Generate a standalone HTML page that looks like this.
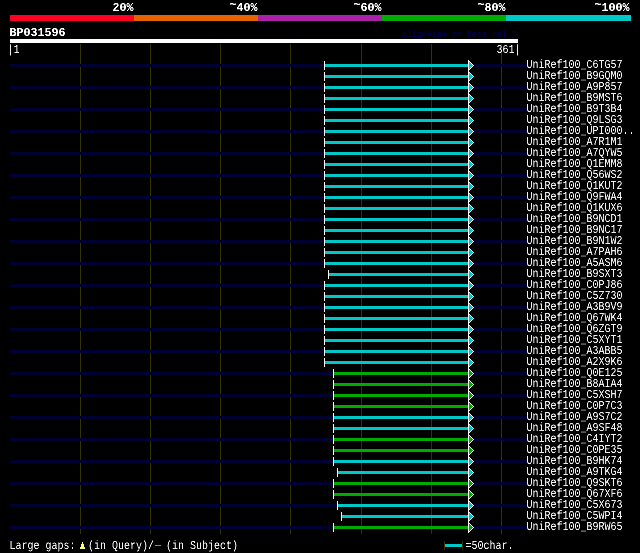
<!DOCTYPE html>
<html lang="en"><head><meta charset="utf-8"><title>AlignView BP031596</title>
<style>
html,body{margin:0;padding:0;background:#000;}
body{width:640px;height:553px;overflow:hidden;}
svg{display:block;will-change:transform;}
text{font-family:"Liberation Mono","DejaVu Sans Mono",monospace;fill:#fff;white-space:pre;text-rendering:geometricPrecision;}
.s{font-size:12.15px;fill:#f0f0f0;}
.b{font-size:12.15px;font-weight:bold;}
.t{font-size:9.1px;fill:#000058;stroke:#000058;stroke-width:0.12px;}
</style></head><body>
<svg width="640" height="553" viewBox="0 0 640 553" shape-rendering="crispEdges">
<defs><filter id="ct" x="0" y="0" width="640" height="553" filterUnits="userSpaceOnUse" color-interpolation-filters="sRGB"><feComponentTransfer><feFuncA type="table" tableValues="0 0 0 0.2 0.5 0.5 0.5 0.85 1 1 1"/></feComponentTransfer></filter></defs>
<rect x="0" y="0" width="640" height="553" fill="#000"/>
<rect x="10" y="15" width="124" height="6" fill="#ff0022"/>
<rect x="134" y="15" width="124" height="6" fill="#e66400"/>
<rect x="258" y="15" width="124" height="6" fill="#aa22aa"/>
<rect x="382" y="15" width="124" height="6" fill="#00aa00"/>
<rect x="506" y="15" width="125" height="6" fill="#00c8c8"/>
<rect x="10" y="39" width="508" height="4" fill="#fff"/>
<rect x="80" y="44" width="1" height="490" fill="#333300"/>
<rect x="150" y="44" width="1" height="490" fill="#333300"/>
<rect x="220" y="44" width="1" height="490" fill="#333300"/>
<rect x="290" y="44" width="1" height="490" fill="#333300"/>
<rect x="361" y="44" width="1" height="490" fill="#333300"/>
<rect x="431" y="44" width="1" height="490" fill="#333300"/>
<rect x="501" y="44" width="1" height="490" fill="#333300"/>
<rect x="10" y="64" width="517" height="3" fill="#000033"/>
<rect x="324" y="64" width="144" height="3" fill="#00c8c8"/>
<rect x="324" y="61" width="1" height="9" fill="#fff"/>
<polygon points="468.5,60.5 473.5,65.5 468.5,70.5" fill="#00c8c8" stroke="#fff" stroke-width="1"/>
<rect x="324" y="75" width="144" height="3" fill="#00c8c8"/>
<rect x="324" y="72" width="1" height="9" fill="#fff"/>
<polygon points="468.5,71.5 473.5,76.5 468.5,81.5" fill="#00c8c8" stroke="#fff" stroke-width="1"/>
<rect x="10" y="86" width="517" height="3" fill="#000033"/>
<rect x="324" y="86" width="144" height="3" fill="#00c8c8"/>
<rect x="324" y="83" width="1" height="9" fill="#fff"/>
<polygon points="468.5,82.5 473.5,87.5 468.5,92.5" fill="#00c8c8" stroke="#fff" stroke-width="1"/>
<rect x="324" y="97" width="144" height="3" fill="#00c8c8"/>
<rect x="324" y="94" width="1" height="9" fill="#fff"/>
<polygon points="468.5,93.5 473.5,98.5 468.5,103.5" fill="#00c8c8" stroke="#fff" stroke-width="1"/>
<rect x="10" y="108" width="517" height="3" fill="#000033"/>
<rect x="324" y="108" width="144" height="3" fill="#00c8c8"/>
<rect x="324" y="105" width="1" height="9" fill="#fff"/>
<polygon points="468.5,104.5 473.5,109.5 468.5,114.5" fill="#00c8c8" stroke="#fff" stroke-width="1"/>
<rect x="324" y="119" width="144" height="3" fill="#00c8c8"/>
<rect x="324" y="116" width="1" height="9" fill="#fff"/>
<polygon points="468.5,115.5 473.5,120.5 468.5,125.5" fill="#00c8c8" stroke="#fff" stroke-width="1"/>
<rect x="10" y="130" width="517" height="3" fill="#000033"/>
<rect x="324" y="130" width="144" height="3" fill="#00c8c8"/>
<rect x="324" y="127" width="1" height="9" fill="#fff"/>
<polygon points="468.5,126.5 473.5,131.5 468.5,136.5" fill="#00c8c8" stroke="#fff" stroke-width="1"/>
<rect x="324" y="141" width="144" height="3" fill="#00c8c8"/>
<rect x="324" y="138" width="1" height="9" fill="#fff"/>
<polygon points="468.5,137.5 473.5,142.5 468.5,147.5" fill="#00c8c8" stroke="#fff" stroke-width="1"/>
<rect x="10" y="152" width="517" height="3" fill="#000033"/>
<rect x="324" y="152" width="144" height="3" fill="#00c8c8"/>
<rect x="324" y="149" width="1" height="9" fill="#fff"/>
<polygon points="468.5,148.5 473.5,153.5 468.5,158.5" fill="#00c8c8" stroke="#fff" stroke-width="1"/>
<rect x="324" y="163" width="144" height="3" fill="#00c8c8"/>
<rect x="324" y="160" width="1" height="9" fill="#fff"/>
<polygon points="468.5,159.5 473.5,164.5 468.5,169.5" fill="#00c8c8" stroke="#fff" stroke-width="1"/>
<rect x="10" y="174" width="517" height="3" fill="#000033"/>
<rect x="324" y="174" width="144" height="3" fill="#00c8c8"/>
<rect x="324" y="171" width="1" height="9" fill="#fff"/>
<polygon points="468.5,170.5 473.5,175.5 468.5,180.5" fill="#00c8c8" stroke="#fff" stroke-width="1"/>
<rect x="324" y="185" width="144" height="3" fill="#00c8c8"/>
<rect x="324" y="182" width="1" height="9" fill="#fff"/>
<polygon points="468.5,181.5 473.5,186.5 468.5,191.5" fill="#00c8c8" stroke="#fff" stroke-width="1"/>
<rect x="10" y="196" width="517" height="3" fill="#000033"/>
<rect x="324" y="196" width="144" height="3" fill="#00c8c8"/>
<rect x="324" y="193" width="1" height="9" fill="#fff"/>
<polygon points="468.5,192.5 473.5,197.5 468.5,202.5" fill="#00c8c8" stroke="#fff" stroke-width="1"/>
<rect x="324" y="207" width="144" height="3" fill="#00c8c8"/>
<rect x="324" y="204" width="1" height="9" fill="#fff"/>
<polygon points="468.5,203.5 473.5,208.5 468.5,213.5" fill="#00c8c8" stroke="#fff" stroke-width="1"/>
<rect x="10" y="218" width="517" height="3" fill="#000033"/>
<rect x="324" y="218" width="144" height="3" fill="#00c8c8"/>
<rect x="324" y="215" width="1" height="9" fill="#fff"/>
<polygon points="468.5,214.5 473.5,219.5 468.5,224.5" fill="#00c8c8" stroke="#fff" stroke-width="1"/>
<rect x="324" y="229" width="144" height="3" fill="#00c8c8"/>
<rect x="324" y="226" width="1" height="9" fill="#fff"/>
<polygon points="468.5,225.5 473.5,230.5 468.5,235.5" fill="#00c8c8" stroke="#fff" stroke-width="1"/>
<rect x="10" y="240" width="517" height="3" fill="#000033"/>
<rect x="324" y="240" width="144" height="3" fill="#00c8c8"/>
<rect x="324" y="237" width="1" height="9" fill="#fff"/>
<polygon points="468.5,236.5 473.5,241.5 468.5,246.5" fill="#00c8c8" stroke="#fff" stroke-width="1"/>
<rect x="324" y="251" width="144" height="3" fill="#00c8c8"/>
<rect x="324" y="248" width="1" height="9" fill="#fff"/>
<polygon points="468.5,247.5 473.5,252.5 468.5,257.5" fill="#00c8c8" stroke="#fff" stroke-width="1"/>
<rect x="10" y="262" width="517" height="3" fill="#000033"/>
<rect x="324" y="262" width="144" height="3" fill="#00c8c8"/>
<rect x="324" y="259" width="1" height="9" fill="#fff"/>
<polygon points="468.5,258.5 473.5,263.5 468.5,268.5" fill="#00c8c8" stroke="#fff" stroke-width="1"/>
<rect x="328" y="273" width="140" height="3" fill="#00c8c8"/>
<rect x="328" y="270" width="1" height="9" fill="#fff"/>
<polygon points="468.5,269.5 473.5,274.5 468.5,279.5" fill="#00c8c8" stroke="#fff" stroke-width="1"/>
<rect x="10" y="284" width="517" height="3" fill="#000033"/>
<rect x="324" y="284" width="144" height="3" fill="#00c8c8"/>
<rect x="324" y="281" width="1" height="9" fill="#fff"/>
<polygon points="468.5,280.5 473.5,285.5 468.5,290.5" fill="#00c8c8" stroke="#fff" stroke-width="1"/>
<rect x="324" y="295" width="144" height="3" fill="#00c8c8"/>
<rect x="324" y="292" width="1" height="9" fill="#fff"/>
<polygon points="468.5,291.5 473.5,296.5 468.5,301.5" fill="#00c8c8" stroke="#fff" stroke-width="1"/>
<rect x="10" y="306" width="517" height="3" fill="#000033"/>
<rect x="324" y="306" width="144" height="3" fill="#00c8c8"/>
<rect x="324" y="303" width="1" height="9" fill="#fff"/>
<polygon points="468.5,302.5 473.5,307.5 468.5,312.5" fill="#00c8c8" stroke="#fff" stroke-width="1"/>
<rect x="324" y="317" width="144" height="3" fill="#00c8c8"/>
<rect x="324" y="314" width="1" height="9" fill="#fff"/>
<polygon points="468.5,313.5 473.5,318.5 468.5,323.5" fill="#00c8c8" stroke="#fff" stroke-width="1"/>
<rect x="10" y="328" width="517" height="3" fill="#000033"/>
<rect x="324" y="328" width="144" height="3" fill="#00c8c8"/>
<rect x="324" y="325" width="1" height="9" fill="#fff"/>
<polygon points="468.5,324.5 473.5,329.5 468.5,334.5" fill="#00c8c8" stroke="#fff" stroke-width="1"/>
<rect x="324" y="339" width="144" height="3" fill="#00c8c8"/>
<rect x="324" y="336" width="1" height="9" fill="#fff"/>
<polygon points="468.5,335.5 473.5,340.5 468.5,345.5" fill="#00c8c8" stroke="#fff" stroke-width="1"/>
<rect x="10" y="350" width="517" height="3" fill="#000033"/>
<rect x="324" y="350" width="144" height="3" fill="#00c8c8"/>
<rect x="324" y="347" width="1" height="9" fill="#fff"/>
<polygon points="468.5,346.5 473.5,351.5 468.5,356.5" fill="#00c8c8" stroke="#fff" stroke-width="1"/>
<rect x="324" y="361" width="144" height="3" fill="#00c8c8"/>
<rect x="324" y="358" width="1" height="9" fill="#fff"/>
<polygon points="468.5,357.5 473.5,362.5 468.5,367.5" fill="#00c8c8" stroke="#fff" stroke-width="1"/>
<rect x="10" y="372" width="517" height="3" fill="#000033"/>
<rect x="333" y="372" width="135" height="3" fill="#00aa00"/>
<rect x="333" y="369" width="1" height="9" fill="#fff"/>
<polygon points="468.5,368.5 473.5,373.5 468.5,378.5" fill="#00aa00" stroke="#fff" stroke-width="1"/>
<rect x="333" y="383" width="135" height="3" fill="#00aa00"/>
<rect x="333" y="380" width="1" height="9" fill="#fff"/>
<polygon points="468.5,379.5 473.5,384.5 468.5,389.5" fill="#00aa00" stroke="#fff" stroke-width="1"/>
<rect x="10" y="394" width="517" height="3" fill="#000033"/>
<rect x="333" y="394" width="135" height="3" fill="#00aa00"/>
<rect x="333" y="391" width="1" height="9" fill="#fff"/>
<polygon points="468.5,390.5 473.5,395.5 468.5,400.5" fill="#00aa00" stroke="#fff" stroke-width="1"/>
<rect x="333" y="405" width="135" height="3" fill="#00aa00"/>
<rect x="333" y="402" width="1" height="9" fill="#fff"/>
<polygon points="468.5,401.5 473.5,406.5 468.5,411.5" fill="#00aa00" stroke="#fff" stroke-width="1"/>
<rect x="10" y="416" width="517" height="3" fill="#000033"/>
<rect x="333" y="416" width="135" height="3" fill="#00c8c8"/>
<rect x="333" y="413" width="1" height="9" fill="#fff"/>
<polygon points="468.5,412.5 473.5,417.5 468.5,422.5" fill="#00c8c8" stroke="#fff" stroke-width="1"/>
<rect x="333" y="427" width="135" height="3" fill="#00c8c8"/>
<rect x="333" y="424" width="1" height="9" fill="#fff"/>
<polygon points="468.5,423.5 473.5,428.5 468.5,433.5" fill="#00c8c8" stroke="#fff" stroke-width="1"/>
<rect x="10" y="438" width="517" height="3" fill="#000033"/>
<rect x="333" y="438" width="135" height="3" fill="#00aa00"/>
<rect x="333" y="435" width="1" height="9" fill="#fff"/>
<polygon points="468.5,434.5 473.5,439.5 468.5,444.5" fill="#00aa00" stroke="#fff" stroke-width="1"/>
<rect x="333" y="449" width="135" height="3" fill="#00aa00"/>
<rect x="333" y="446" width="1" height="9" fill="#fff"/>
<polygon points="468.5,445.5 473.5,450.5 468.5,455.5" fill="#00aa00" stroke="#fff" stroke-width="1"/>
<rect x="10" y="460" width="517" height="3" fill="#000033"/>
<rect x="333" y="460" width="135" height="3" fill="#00c8c8"/>
<rect x="333" y="457" width="1" height="9" fill="#fff"/>
<polygon points="468.5,456.5 473.5,461.5 468.5,466.5" fill="#00c8c8" stroke="#fff" stroke-width="1"/>
<rect x="337" y="471" width="131" height="3" fill="#00c8c8"/>
<rect x="337" y="468" width="1" height="9" fill="#fff"/>
<polygon points="468.5,467.5 473.5,472.5 468.5,477.5" fill="#00c8c8" stroke="#fff" stroke-width="1"/>
<rect x="10" y="482" width="517" height="3" fill="#000033"/>
<rect x="333" y="482" width="135" height="3" fill="#00aa00"/>
<rect x="333" y="479" width="1" height="9" fill="#fff"/>
<polygon points="468.5,478.5 473.5,483.5 468.5,488.5" fill="#00aa00" stroke="#fff" stroke-width="1"/>
<rect x="333" y="493" width="135" height="3" fill="#00aa00"/>
<rect x="333" y="490" width="1" height="9" fill="#fff"/>
<polygon points="468.5,489.5 473.5,494.5 468.5,499.5" fill="#00aa00" stroke="#fff" stroke-width="1"/>
<rect x="10" y="504" width="517" height="3" fill="#000033"/>
<rect x="337" y="504" width="131" height="3" fill="#00c8c8"/>
<rect x="337" y="501" width="1" height="9" fill="#fff"/>
<polygon points="468.5,500.5 473.5,505.5 468.5,510.5" fill="#00c8c8" stroke="#fff" stroke-width="1"/>
<rect x="341" y="515" width="127" height="3" fill="#00c8c8"/>
<rect x="341" y="512" width="1" height="9" fill="#fff"/>
<polygon points="468.5,511.5 473.5,516.5 468.5,521.5" fill="#00c8c8" stroke="#fff" stroke-width="1"/>
<rect x="10" y="526" width="517" height="3" fill="#000033"/>
<rect x="333" y="526" width="135" height="3" fill="#00aa00"/>
<rect x="333" y="523" width="1" height="9" fill="#fff"/>
<polygon points="468.5,522.5 473.5,527.5 468.5,532.5" fill="#00aa00" stroke="#fff" stroke-width="1"/>
<path d="M82 542h1v2h1v3h1v2h-5v-2h1v-3h1z" fill="#ffff70"/>
<rect x="155" y="545" width="6" height="1" fill="#00c8c8"/>
<rect x="444" y="541" width="1" height="9" fill="#333300"/>
<rect x="462" y="541" width="1" height="9" fill="#333300"/>
<rect x="445" y="544" width="17" height="3" fill="#00c8c8"/>
<g filter="url(#ct)">
<text class="b" x="112.5" y="11" textLength="21" lengthAdjust="spacingAndGlyphs">20%</text>
<text class="b" x="229.5" y="11" textLength="28" lengthAdjust="spacingAndGlyphs"><tspan dy="-3.5">~</tspan><tspan dy="3.5">40%</tspan></text>
<text class="b" x="353.5" y="11" textLength="28" lengthAdjust="spacingAndGlyphs"><tspan dy="-3.5">~</tspan><tspan dy="3.5">60%</tspan></text>
<text class="b" x="477.5" y="11" textLength="28" lengthAdjust="spacingAndGlyphs"><tspan dy="-3.5">~</tspan><tspan dy="3.5">80%</tspan></text>
<text class="b" x="594.5" y="11" textLength="35" lengthAdjust="spacingAndGlyphs"><tspan dy="-3.5">~</tspan><tspan dy="3.5">100%</tspan></text>
<text class="b" x="9.5" y="36" textLength="56" lengthAdjust="spacingAndGlyphs">BP031596</text>
<text class="t" x="402" y="37" textLength="115" lengthAdjust="spacingAndGlyphs">AlignView.pm Beta rel.7</text>
<text class="s" x="7.5" y="53" textLength="12" lengthAdjust="spacingAndGlyphs">|1</text>
<text class="s" x="496.5" y="53" textLength="24" lengthAdjust="spacingAndGlyphs">361|</text>
<text class="s" x="526.5" y="68" textLength="96" lengthAdjust="spacingAndGlyphs">UniRef100_C6TG57</text>
<text class="s" x="526.5" y="79" textLength="96" lengthAdjust="spacingAndGlyphs">UniRef100_B9GQM0</text>
<text class="s" x="526.5" y="90" textLength="96" lengthAdjust="spacingAndGlyphs">UniRef100_A9P857</text>
<text class="s" x="526.5" y="101" textLength="96" lengthAdjust="spacingAndGlyphs">UniRef100_B9MST6</text>
<text class="s" x="526.5" y="112" textLength="96" lengthAdjust="spacingAndGlyphs">UniRef100_B9T3B4</text>
<text class="s" x="526.5" y="123" textLength="96" lengthAdjust="spacingAndGlyphs">UniRef100_Q9LSG3</text>
<text class="s" x="526.5" y="134" textLength="108" lengthAdjust="spacingAndGlyphs">UniRef100_UPI000..</text>
<text class="s" x="526.5" y="145" textLength="96" lengthAdjust="spacingAndGlyphs">UniRef100_A7R1M1</text>
<text class="s" x="526.5" y="156" textLength="96" lengthAdjust="spacingAndGlyphs">UniRef100_A7QYW5</text>
<text class="s" x="526.5" y="167" textLength="96" lengthAdjust="spacingAndGlyphs">UniRef100_Q1EMM8</text>
<text class="s" x="526.5" y="178" textLength="96" lengthAdjust="spacingAndGlyphs">UniRef100_Q56WS2</text>
<text class="s" x="526.5" y="189" textLength="96" lengthAdjust="spacingAndGlyphs">UniRef100_Q1KUT2</text>
<text class="s" x="526.5" y="200" textLength="96" lengthAdjust="spacingAndGlyphs">UniRef100_Q9FWA4</text>
<text class="s" x="526.5" y="211" textLength="96" lengthAdjust="spacingAndGlyphs">UniRef100_Q1KUX6</text>
<text class="s" x="526.5" y="222" textLength="96" lengthAdjust="spacingAndGlyphs">UniRef100_B9NCD1</text>
<text class="s" x="526.5" y="233" textLength="96" lengthAdjust="spacingAndGlyphs">UniRef100_B9NC17</text>
<text class="s" x="526.5" y="244" textLength="96" lengthAdjust="spacingAndGlyphs">UniRef100_B9N1W2</text>
<text class="s" x="526.5" y="255" textLength="96" lengthAdjust="spacingAndGlyphs">UniRef100_A7PAH6</text>
<text class="s" x="526.5" y="266" textLength="96" lengthAdjust="spacingAndGlyphs">UniRef100_A5ASM6</text>
<text class="s" x="526.5" y="277" textLength="96" lengthAdjust="spacingAndGlyphs">UniRef100_B9SXT3</text>
<text class="s" x="526.5" y="288" textLength="96" lengthAdjust="spacingAndGlyphs">UniRef100_C0PJ86</text>
<text class="s" x="526.5" y="299" textLength="96" lengthAdjust="spacingAndGlyphs">UniRef100_C5Z730</text>
<text class="s" x="526.5" y="310" textLength="96" lengthAdjust="spacingAndGlyphs">UniRef100_A3B9V9</text>
<text class="s" x="526.5" y="321" textLength="96" lengthAdjust="spacingAndGlyphs">UniRef100_Q67WK4</text>
<text class="s" x="526.5" y="332" textLength="96" lengthAdjust="spacingAndGlyphs">UniRef100_Q6ZGT9</text>
<text class="s" x="526.5" y="343" textLength="96" lengthAdjust="spacingAndGlyphs">UniRef100_C5XYT1</text>
<text class="s" x="526.5" y="354" textLength="96" lengthAdjust="spacingAndGlyphs">UniRef100_A3ABB5</text>
<text class="s" x="526.5" y="365" textLength="96" lengthAdjust="spacingAndGlyphs">UniRef100_A2X9K6</text>
<text class="s" x="526.5" y="376" textLength="96" lengthAdjust="spacingAndGlyphs">UniRef100_Q0E125</text>
<text class="s" x="526.5" y="387" textLength="96" lengthAdjust="spacingAndGlyphs">UniRef100_B8AIA4</text>
<text class="s" x="526.5" y="398" textLength="96" lengthAdjust="spacingAndGlyphs">UniRef100_C5XSH7</text>
<text class="s" x="526.5" y="409" textLength="96" lengthAdjust="spacingAndGlyphs">UniRef100_C0P7C3</text>
<text class="s" x="526.5" y="420" textLength="96" lengthAdjust="spacingAndGlyphs">UniRef100_A9S7C2</text>
<text class="s" x="526.5" y="431" textLength="96" lengthAdjust="spacingAndGlyphs">UniRef100_A9SF48</text>
<text class="s" x="526.5" y="442" textLength="96" lengthAdjust="spacingAndGlyphs">UniRef100_C4IYT2</text>
<text class="s" x="526.5" y="453" textLength="96" lengthAdjust="spacingAndGlyphs">UniRef100_C0PE35</text>
<text class="s" x="526.5" y="464" textLength="96" lengthAdjust="spacingAndGlyphs">UniRef100_B9HK74</text>
<text class="s" x="526.5" y="475" textLength="96" lengthAdjust="spacingAndGlyphs">UniRef100_A9TKG4</text>
<text class="s" x="526.5" y="486" textLength="96" lengthAdjust="spacingAndGlyphs">UniRef100_Q9SKT6</text>
<text class="s" x="526.5" y="497" textLength="96" lengthAdjust="spacingAndGlyphs">UniRef100_Q67XF6</text>
<text class="s" x="526.5" y="508" textLength="96" lengthAdjust="spacingAndGlyphs">UniRef100_C5X673</text>
<text class="s" x="526.5" y="519" textLength="96" lengthAdjust="spacingAndGlyphs">UniRef100_C5WPI4</text>
<text class="s" x="526.5" y="530" textLength="96" lengthAdjust="spacingAndGlyphs">UniRef100_B9RW65</text>
<text class="s" x="9.5" y="549" textLength="66" lengthAdjust="spacingAndGlyphs">Large gaps:</text>
<text class="s" x="88" y="549" textLength="66" lengthAdjust="spacingAndGlyphs">(in Query)/</text>
<text class="s" x="166" y="549" textLength="72" lengthAdjust="spacingAndGlyphs">(in Subject)</text>
<text class="s" x="465.5" y="549" textLength="48" lengthAdjust="spacingAndGlyphs">=50char.</text>
</g>
</svg>
</body></html>
